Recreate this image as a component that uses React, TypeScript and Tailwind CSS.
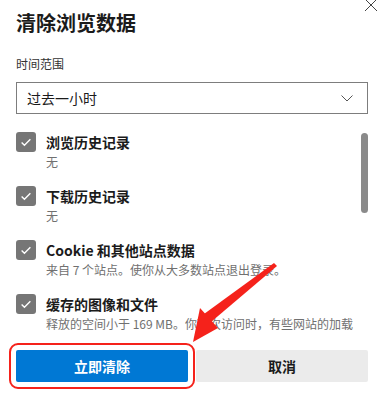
import React from "react"

const FONT = '"Noto Sans CJK SC", "Noto Sans", sans-serif'

const items = [
  { title: "浏览历史记录", sub: "无" },
  { title: "下载历史记录", sub: "无" },
  { title: "Cookie 和其他站点数据", sub: "来自 7 个站点。使你从大多数站点退出登录。" },
  // rest of this line is scrolled out of view
  { title: "缓存的图像和文件", sub: "释放的空间小于 169 MB。你下次访问时，有些网站的加载" },
]

function CheckBox() {
  return (
    <div className="flex h-[20px] w-[20px] shrink-0 items-center justify-center rounded-[3px] bg-[#767676]">
      <svg viewBox="0 0 16 16" className="h-[14px] w-[14px] fill-none stroke-white" strokeWidth={1.6}>
        <path d="M3 8.5l3.2 3.2L13 4.8" />
      </svg>
    </div>
  )
}

export default function App() {
  return (
    <div
      className="relative h-[398px] w-[382px] overflow-hidden bg-white text-[#1b1b1b]"
      style={{ fontFamily: FONT }}
    >
      {/* close */}
      <svg
        viewBox="0 0 14 14"
        className="absolute right-[4px] top-[-2px] h-[14px] w-[14px] fill-none stroke-[#444]"
        strokeWidth={1}
      >
        <path d="M1 1l12 12M13 1L1 13" />
      </svg>

      <div className="pl-[16px] pr-[14px] pt-[9px]">
        <h1 className="text-[20px] font-bold leading-[28px]">清除浏览数据</h1>

        <div className="mt-[19px] text-[12px] leading-[16px] text-[#333]">时间范围</div>

        <div className="mt-[10px] flex h-[32px] items-center justify-between border border-[#7d7d7d] pl-[10px] pr-[14px]">
          <span className="text-[14px] leading-[20px]">过去一小时</span>
          <svg viewBox="0 0 12 7" className="h-[7px] w-[12px] fill-none stroke-[#555]" strokeWidth={1}>
            <path d="M0.5 0.5L6 6l5.5-5.5" />
          </svg>
        </div>

        <div className="mt-[18px] flex h-[199px] overflow-hidden">
          <div className="flex w-[344px] flex-col gap-[14px]">
            {items.map((it) => (
              <div key={it.title} className="flex gap-[10px]">
                <CheckBox />
                <div className="min-w-0 flex-1">
                  <div className="text-[14px] font-semibold leading-[20px]">{it.title}</div>
                  <div className="whitespace-nowrap text-[12px] leading-[20px] text-[#707070]">{it.sub}</div>
                </div>
              </div>
            ))}
          </div>
          <div className="ml-auto pt-[1px]">
            <div className="h-[80px] w-[7px] rounded-full bg-[#8a8a8a]" />
          </div>
        </div>

        <div className="mt-[19px] flex gap-[8px]">
          <button className="h-[32px] flex-1 rounded-[2px] bg-[#0078d4] text-[14px] font-bold text-white outline outline-[2.5px] outline-offset-[5px] outline-[#f5221b]">
            立即清除
          </button>
          <button className="h-[32px] flex-1 rounded-[2px] bg-[#ebebeb] text-[14px] font-bold text-[#1b1b1b]">
            取消
          </button>
        </div>
      </div>

      {/* annotation arrow */}
      <svg className="pointer-events-none absolute left-0 top-0" width="382" height="398" viewBox="0 0 382 398">
        <path d="M274 263 L277 266 L211 322 L204 314 Z" fill="#f5221b" />
        <path d="M193 342 L200 308 L218 328 Z" fill="#f5221b" />
      </svg>
    </div>
  )
}
